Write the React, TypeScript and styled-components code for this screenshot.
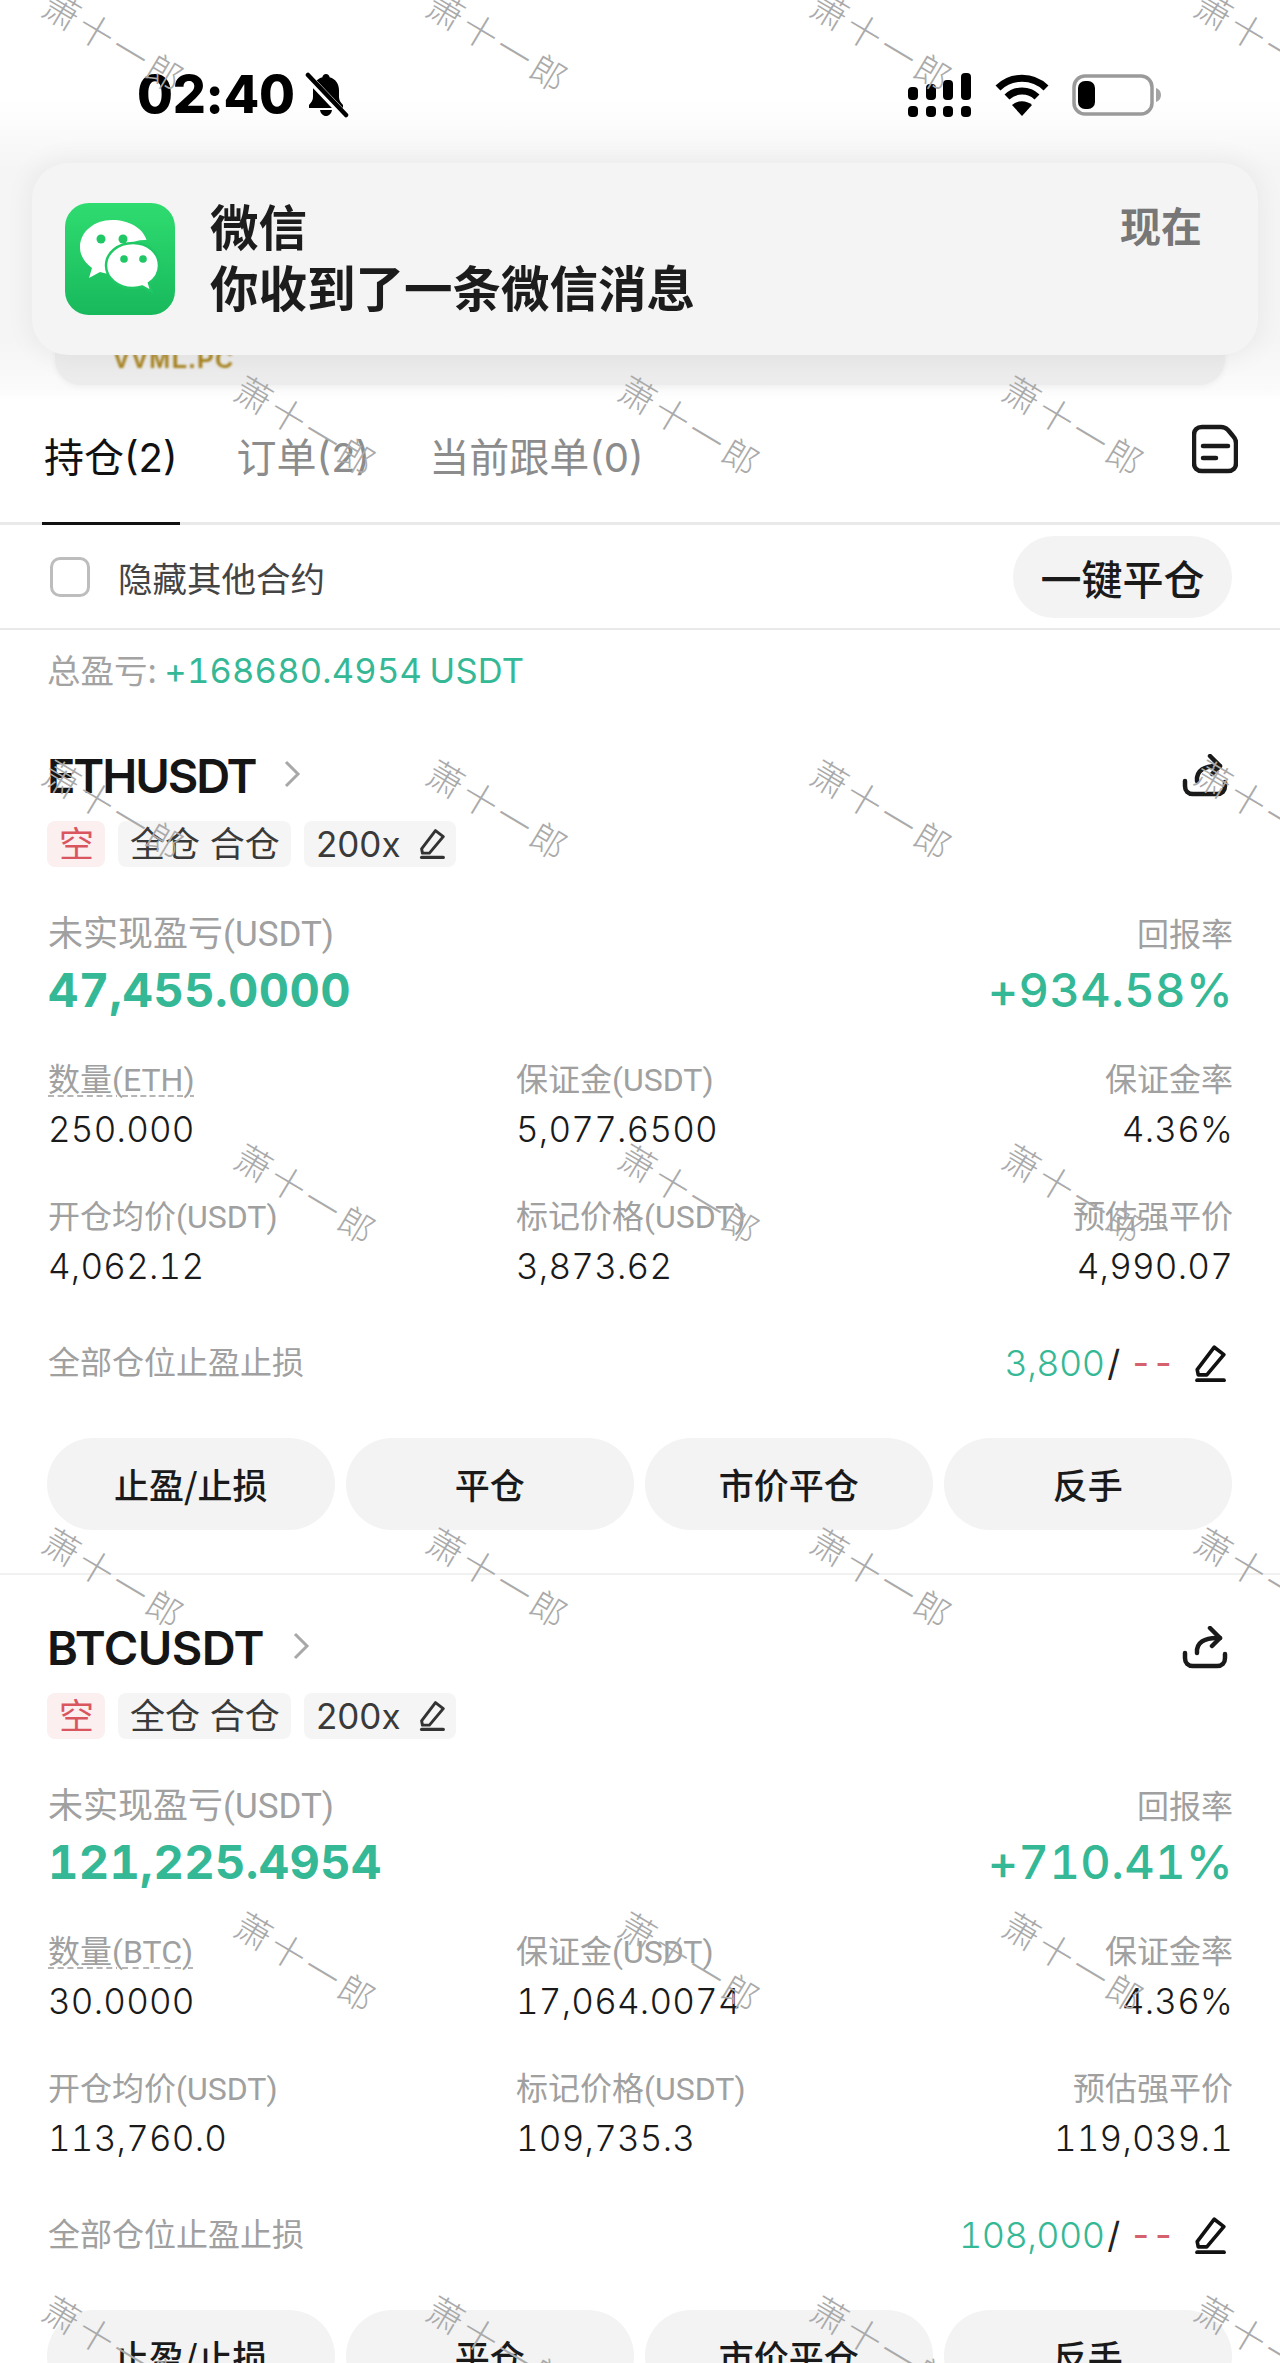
import React from "react";
import styled, { createGlobalStyle } from "styled-components";

const CJK = `"Noto Sans CJK SC", sans-serif`;
const NUM = `Inter, "Noto Sans CJK SC", sans-serif`;
const LABEL = `Roboto, "Noto Sans CJK SC", sans-serif`;
const GREEN = "#35b895";
const RED = "#d4616c";

const Global = createGlobalStyle`
  html, body { margin: 0; padding: 0; background: #fff; }
  * { box-sizing: border-box; }
`;

const Page = styled.div`
  position: relative; width: 1280px; height: 2363px; overflow: hidden; background: #fff;
  font-family: ${NUM}; color: #1a1a1a;
`;
const TopArea = styled.div`
  position: relative; height: 400px;
  background: linear-gradient(180deg, #fff 0, #fff 100px, #f5f5f5 170px, #f5f5f5 340px, #fbfbfb 390px, #fff 400px);
`;
const StatusBar = styled.div`
  display: flex; align-items: center; padding: 65px 118px 0 137px; height: 125px;
`;
const Time = styled.div`
  font: 800 52px/60px Inter, sans-serif; color: #000; letter-spacing: -0.3px; margin-right: 7px;
`;
const StatusRight = styled.div`
  display: flex; align-items: center; gap: 22px; margin-left: auto;
`;
const Backplate = styled.div`
  position: absolute; left: 55px; top: 300px; width: 1170px; height: 85px;
  background: #ececec; border-radius: 0 0 26px 26px; box-shadow: 0 2px 6px rgba(0,0,0,.05);
`;
const GoldText = styled.div`
  position: absolute; left: 58px; top: 47px; font: 800 25px/25px "Liberation Sans", sans-serif;
  color: #a8831f; filter: blur(0.8px); letter-spacing: 1.500px;
`;
const Notification = styled.div`
  position: relative; margin: 38px 22px 0 32px; height: 192px; padding: 40px 56px 0 33px;
  display: flex; border-radius: 36px; background: #f4f4f4; box-shadow: 0 0 26px 4px rgba(0,0,0,.05);
`;
const AppIcon = styled.div`
  width: 110px; height: 112px; flex: none; border-radius: 24px; overflow: hidden;
  display: flex; align-items: center; justify-content: center;
  background: linear-gradient(180deg, #2fdc70 0%, #18b95c 100%);
`;
const NotifText = styled.div`
  margin-left: 35px; display: flex; flex-direction: column; margin-top: -8px;
`;
const NotifLine = styled.div`
  font: 700 48.500px/61px ${CJK}; color: #1c1c1c; white-space: nowrap;
`;
const NotifTime = styled.div`
  margin-left: auto; font: 700 41px/48px ${CJK}; color: #777; margin-top: -3px;
`;
const Tabs = styled.div`
  display: flex; align-items: flex-start; height: 125px; border-bottom: 3px solid #e9e9e9; padding: 32px 42px 0 42px; gap: 55px;
`;
const Tab = styled.div<{ $active?: boolean }>`
  height: 93px; font: 400 40px/52px ${NUM}; color: ${p => (p.$active ? "#111" : "#8c8c8c")}; white-space: nowrap;
  border-bottom: 3px solid ${p => (p.$active ? "#111" : "transparent")};
  padding: 0 2px;
`;
const DocButton = styled.div`
  margin-left: auto; margin-top: -8px; display: flex;
`;
const FilterRow = styled.div`
  display: flex; align-items: center; height: 105px; padding: 0 48px 0 50px; border-bottom: 2px solid #e9e9e9;
`;
const Check = styled.div`
  width: 40px; height: 40px; border: 3px solid #bdbdbd; border-radius: 10px;
`;
const FilterLabel = styled.div`
  margin-left: 28px; font: 400 34.500px/44px ${CJK}; color: #444;
`;
const CloseAll = styled.div`
  margin-left: auto; width: 219px; height: 82px; border-radius: 41px; background: #f3f3f3;
  display: flex; align-items: center; justify-content: center; font: 500 41px/50px ${CJK}; color: #1a1a1a;
`;
const Summary = styled.div`
  height: 95px; padding: 14px 47px 0; font: 400 33.500px/50px ${CJK}; color: #a3a3a3; white-space: nowrap;
`;
const SummaryValue = styled.span`
  font: 400 34.500px/50px ${NUM}; color: ${GREEN}; font-variant-numeric: tabular-nums; word-spacing: -2px; letter-spacing: 0.2px;
`;
const Card = styled.section`
  margin: 0 0 22px; padding: 26px 47px 43px 48px;
  border-bottom: 2px solid #f1f1f1;
`;
const TitleRow = styled.div`
  display: flex; align-items: center; height: 50px;
`;
const Symbol = styled.div<{ $spacing: number }>`
  font: 600 47px/50px ${NUM}; color: #151515; letter-spacing: ${p => p.$spacing}px; margin-left: -1px;
`;
const ShareButton = styled.div`
  margin-left: auto; display: flex; margin-right: 5px;
`;
const Tags = styled.div`
  display: flex; gap: 13px; margin-top: 20px; margin-left: -1px;
`;
const Tag = styled.div<{ $red?: boolean }>`
  height: 46px; padding: 0 11px 0 12px; border-radius: 8px; display: flex; align-items: center; gap: 18px; white-space: pre;
  background: ${p => (p.$red ? "#fbeff0" : "#f5f5f5")}; color: ${p => (p.$red ? "#d9565f" : "#3a3a3a")};
  font: 400 35px/46px ${NUM};
`;
const PnlBlock = styled.div`
  display: flex; justify-content: space-between; margin-top: 46px;
`;
const RightCol = styled.div`
  display: flex; flex-direction: column; align-items: flex-end;
`;
const Label = styled.div<{ $dashed?: boolean; $large?: boolean }>`
  font: 400 ${p => (p.$large ? 35 : 32)}px/44px ${LABEL}; color: #a0a0a0; white-space: nowrap; width: fit-content;
  ${p => p.$dashed && `text-decoration: underline dashed #b5b5b5 2px; text-underline-offset: 4px;`}
`;
const BigValue = styled.div`
  margin-top: 3px; font: 700 47px/60px ${NUM}; color: ${GREEN}; letter-spacing: 0.4px; white-space: nowrap;
  font-variant-numeric: tabular-nums;
`;
const BigRate = styled(BigValue)`
  font-weight: 500; letter-spacing: 0.4px;
`;
const StatGrid = styled.div`
  display: grid; grid-template-columns: 468px 1fr auto; row-gap: 44px; margin-top: 38px;
`;
const Stat = styled.div<{ $right?: boolean }>`
  display: flex; flex-direction: column; align-items: ${p => (p.$right ? "flex-end" : "flex-start")};
`;
const StatValue = styled.div`
  margin-top: 5px; font: 300 35px/44px ${NUM}; color: #1a1a1a; letter-spacing: 0.2px; white-space: nowrap;
  font-variant-numeric: tabular-nums;
`;
const StopRow = styled.div`
  display: flex; align-items: center; justify-content: space-between; height: 50px; margin-top: 50px;
`;
const StopValues = styled.div`
  display: flex; align-items: center; font: 300 36px/50px ${NUM}; white-space: pre; font-variant-numeric: tabular-nums;
`;
const Up = styled.span`color: ${GREEN}; letter-spacing: -0.6px;`;
const Down = styled.span`color: ${RED}; font-weight: 400; letter-spacing: -1px;`;
const Slash = styled.span`color: #222; font-weight: 400; margin: 0 9px 0 3px;`;
const EditWrap = styled.span`
  display: flex; margin-left: 20px; margin-right: 7px;
`;
const Actions = styled.div`
  display: grid; grid-template-columns: repeat(4, 287.500px); column-gap: 11.500px; margin-top: 50px; margin-left: -1px;
`;
const ActionBtn = styled.div`
  height: 92px; border-radius: 46px; background: #f3f3f3; display: flex; align-items: center; justify-content: center;
  font: 500 35px/44px ${CJK}; color: #1a1a1a;
`;
const Overlay = styled.div`
  position: absolute; inset: 0; pointer-events: none; overflow: hidden;
`;
const Mark = styled.div`
  position: absolute; width: 170px; height: 44px; display: flex; justify-content: center; align-items: center;
  transform: rotate(31deg); font: 300 36px/44px ${CJK}; color: #aaaaaa; letter-spacing: 4px; white-space: nowrap;
`;

const BellOff = () => (
  <svg width="48" height="46" viewBox="0 0 46 46">
    <path fill="#000" d="M23 2c2 0 3.400 1.400 3.600 3.200C33 6.800 36 12.500 36 18v7c0 3 1.600 5.500 4 8v3H6v-3c2.400-2.500 4-5 4-8v-7c0-5.500 3-11.200 9.400-12.800C19.600 3.400 21 2 23 2z" />
    <path fill="#000" d="M17 38h12c-.6 3.500-3 6-6 6s-5.400-2.500-6-6z" />
    <path d="M4 4 L42 44" stroke="#fff" strokeWidth="8" />
    <path d="M5 3 L43 43" stroke="#000" strokeWidth="4.500" strokeLinecap="round" />
  </svg>
);
const Signal = () => (
  <svg width="64" height="44" viewBox="0 0 64 44" fill="#000">
    {[0, 18, 35, 53].map((x, i) => (
      <g key={x}>
        <rect x={x} y={33} width="10" height="11" rx="4" />
        <rect x={x} y={[14, 11, 7, 0][i]} width="10" height={[13, 16, 20, 27][i]} rx="4" />
      </g>
    ))}
  </svg>
);
const Wifi = () => (
  <svg width="56" height="42" viewBox="0 0 56 42" fill="none" stroke="#000" strokeWidth="7">
    <path d="M4 14C17 1 39 1 52 14" />
    <path d="M13 23C21 15 35 15 43 23" />
    <path fill="#000" stroke="none" d="M28 42 L18 31 C24 26 32 26 38 31 Z" />
  </svg>
);
const Battery = () => (
  <svg width="90" height="42" viewBox="0 0 90 42">
    <rect x="2" y="2" width="78" height="38" rx="11" fill="none" stroke="#9a9a9a" strokeWidth="3.500" />
    <rect x="6" y="7" width="17" height="28" rx="7" fill="#000" />
    <path d="M84 14c3 1 5 3.500 5 7s-2 6-5 7z" fill="#a5a5a5" />
  </svg>
);
const WeChat = () => (
  <svg width="90" height="90" viewBox="0 0 90 90">
    <path fill="#fff" d="M37 6C19 6 5 18 5 33c0 9 5 16 12 21l-3 10 11-6c4 1 8 2 12 2 2 0 3 0 5-.2-1-2.800-1.500-5.800-1.500-8.800 0-14 13-25 29-25h2C68 14 54 6 37 6z" />
    <circle cx="26" cy="25" r="4.500" fill="#1fc864" />
    <circle cx="48" cy="25" r="4.500" fill="#1fc864" />
    <path fill="#fff" stroke="#1fc864" strokeWidth="2.500" d="M58 29c-15 0-27 10-27 22.500S43 74 58 74c3.500 0 6.500-.5 9.500-1.500l9 5-2.500-8.500c6-4 10-10.500 10-17.500C84 39 73 29 58 29z" />
    <circle cx="49" cy="45" r="3.800" fill="#1fc864" />
    <circle cx="68" cy="45" r="3.800" fill="#1fc864" />
  </svg>
);
const DocIcon = () => (
  <svg width="46" height="50" viewBox="0 0 46 50" fill="none" stroke="#1a1a1a" strokeWidth="4.500" strokeLinecap="round" strokeLinejoin="round">
    <path d="M10 3H29C32 3 34 4 36 6L41 12C43 14 44 16 44 19V39C44 44 41 47 36 47H10C5 47 2 44 2 39V11C2 6 5 3 10 3Z" />
    <path d="M11 22H36" />
    <path d="M11 34H24" />
  </svg>
);
const ShareIcon = () => (
  <svg width="46" height="44" viewBox="0 0 46 44" fill="none" stroke="#1a1a1a" strokeWidth="4.500" strokeLinecap="round" strokeLinejoin="round">
    <path d="M15 27C14 17 22 11 38 12" />
    <path d="M28 2L38 12L30 20" />
    <path d="M3 27V32C3 37 6 40 11 40H35C40 40 43 37 43 32V28" />
  </svg>
);
const Edit = ({ size, color = "#111" }: { size: number; color?: string }) => (
  <svg width={size} height={size * 1.2} viewBox="0 0 30 36" fill="none" stroke={color} strokeWidth="3.400" strokeLinejoin="round">
    <path d="M3 24L19 3L28 10L12 29H4Z" />
    <path d="M3 34H28" strokeWidth="3.800" strokeLinecap="round" />
  </svg>
);
const Chevron = styled.svg`
  margin-left: 28px; margin-top: -4px;
`;

type Pos = {
  symbol: string; coin: string; pnl: string; rate: string; qty: string; margin: string;
  entry: string; mark: string; liq: string; tp: string; spacing: number;
};
const positions: Pos[] = [
  { symbol: "ETHUSDT", coin: "ETH", pnl: "47,455.0000", rate: "+934.58%", qty: "250.000", margin: "5,077.6500", entry: "4,062.12", mark: "3,873.62", liq: "4,990.07", tp: "3,800", spacing: -2.1 },
  { symbol: "BTCUSDT", coin: "BTC", pnl: "121,225.4954", rate: "+710.41%", qty: "30.0000", margin: "17,064.0074", entry: "113,760.0", mark: "109,735.3", liq: "119,039.1", tp: "108,000", spacing: -0.6 },
];

const PositionCard = ({ p }: { p: Pos }) => (
  <Card>
    <TitleRow>
      <Symbol $spacing={p.spacing}>{p.symbol}</Symbol>
      <Chevron width="18" height="30" viewBox="0 0 18 30" fill="none" stroke="#a8a8a8" strokeWidth="3">
        <path d="M3 3L15 15L3 27" />
      </Chevron>
      <ShareButton><ShareIcon /></ShareButton>
    </TitleRow>
    <Tags>
      <Tag $red>空</Tag>
      <Tag>全仓 合仓</Tag>
      <Tag>200x<Edit size={26} color="#333" /></Tag>
    </Tags>
    <PnlBlock>
      <div>
        <Label $large>未实现盈亏(USDT)</Label>
        <BigValue>{p.pnl}</BigValue>
      </div>
      <RightCol>
        <Label>回报率</Label>
        <BigRate>{p.rate}</BigRate>
      </RightCol>
    </PnlBlock>
    <StatGrid>
      <Stat><Label $dashed>数量({p.coin})</Label><StatValue>{p.qty}</StatValue></Stat>
      <Stat><Label>保证金(USDT)</Label><StatValue>{p.margin}</StatValue></Stat>
      <Stat $right><Label>保证金率</Label><StatValue>4.36%</StatValue></Stat>
      <Stat><Label>开仓均价(USDT)</Label><StatValue>{p.entry}</StatValue></Stat>
      <Stat><Label>标记价格(USDT)</Label><StatValue>{p.mark}</StatValue></Stat>
      <Stat $right><Label>预估强平价</Label><StatValue>{p.liq}</StatValue></Stat>
    </StatGrid>
    <StopRow>
      <Label>全部仓位止盈止损</Label>
      <StopValues>
        <Up>{p.tp}</Up><Slash>/</Slash><Down>--</Down>
        <EditWrap><Edit size={32} /></EditWrap>
      </StopValues>
    </StopRow>
    <Actions>
      {["止盈/止损", "平仓", "市价平仓", "反手"].map(t => <ActionBtn key={t}>{t}</ActionBtn>)}
    </Actions>
  </Card>
);

const marks: { x: number; y: number }[] = [];
for (let r = 0; r < 7; r++) {
  for (let k = 0; k < 4; k++) {
    marks.push({ x: 31 + (r % 2 ? 192 : 0) + k * 384, y: 19 + r * 384 });
  }
}

export default function App() {
  return (
    <Page>
      <Global />
      <TopArea>
        <StatusBar>
          <Time>02:40</Time>
          <BellOff />
          <StatusRight>
            <Signal />
            <Wifi />
            <Battery />
          </StatusRight>
        </StatusBar>
        <Backplate><GoldText>VVML.PC</GoldText></Backplate>
        <Notification>
          <AppIcon><WeChat /></AppIcon>
          <NotifText>
            <NotifLine>微信</NotifLine>
            <NotifLine>你收到了一条微信消息</NotifLine>
          </NotifText>
          <NotifTime>现在</NotifTime>
        </Notification>
      </TopArea>
      <Tabs>
        <Tab $active>持仓(2)</Tab>
        <Tab>订单(2)</Tab>
        <Tab>当前跟单(0)</Tab>
        <DocButton><DocIcon /></DocButton>
      </Tabs>
      <FilterRow>
        <Check />
        <FilterLabel>隐藏其他合约</FilterLabel>
        <CloseAll>一键平仓</CloseAll>
      </FilterRow>
      <Summary>总盈亏: <SummaryValue>+168680.4954 USDT</SummaryValue></Summary>
      {positions.map(p => <PositionCard key={p.symbol} p={p} />)}
      <Overlay>
        {marks.map(m => (
          <Mark key={`${m.x}-${m.y}`} style={{ left: m.x, top: m.y }}>萧十一郎</Mark>
        ))}
      </Overlay>
    </Page>
  );
}
